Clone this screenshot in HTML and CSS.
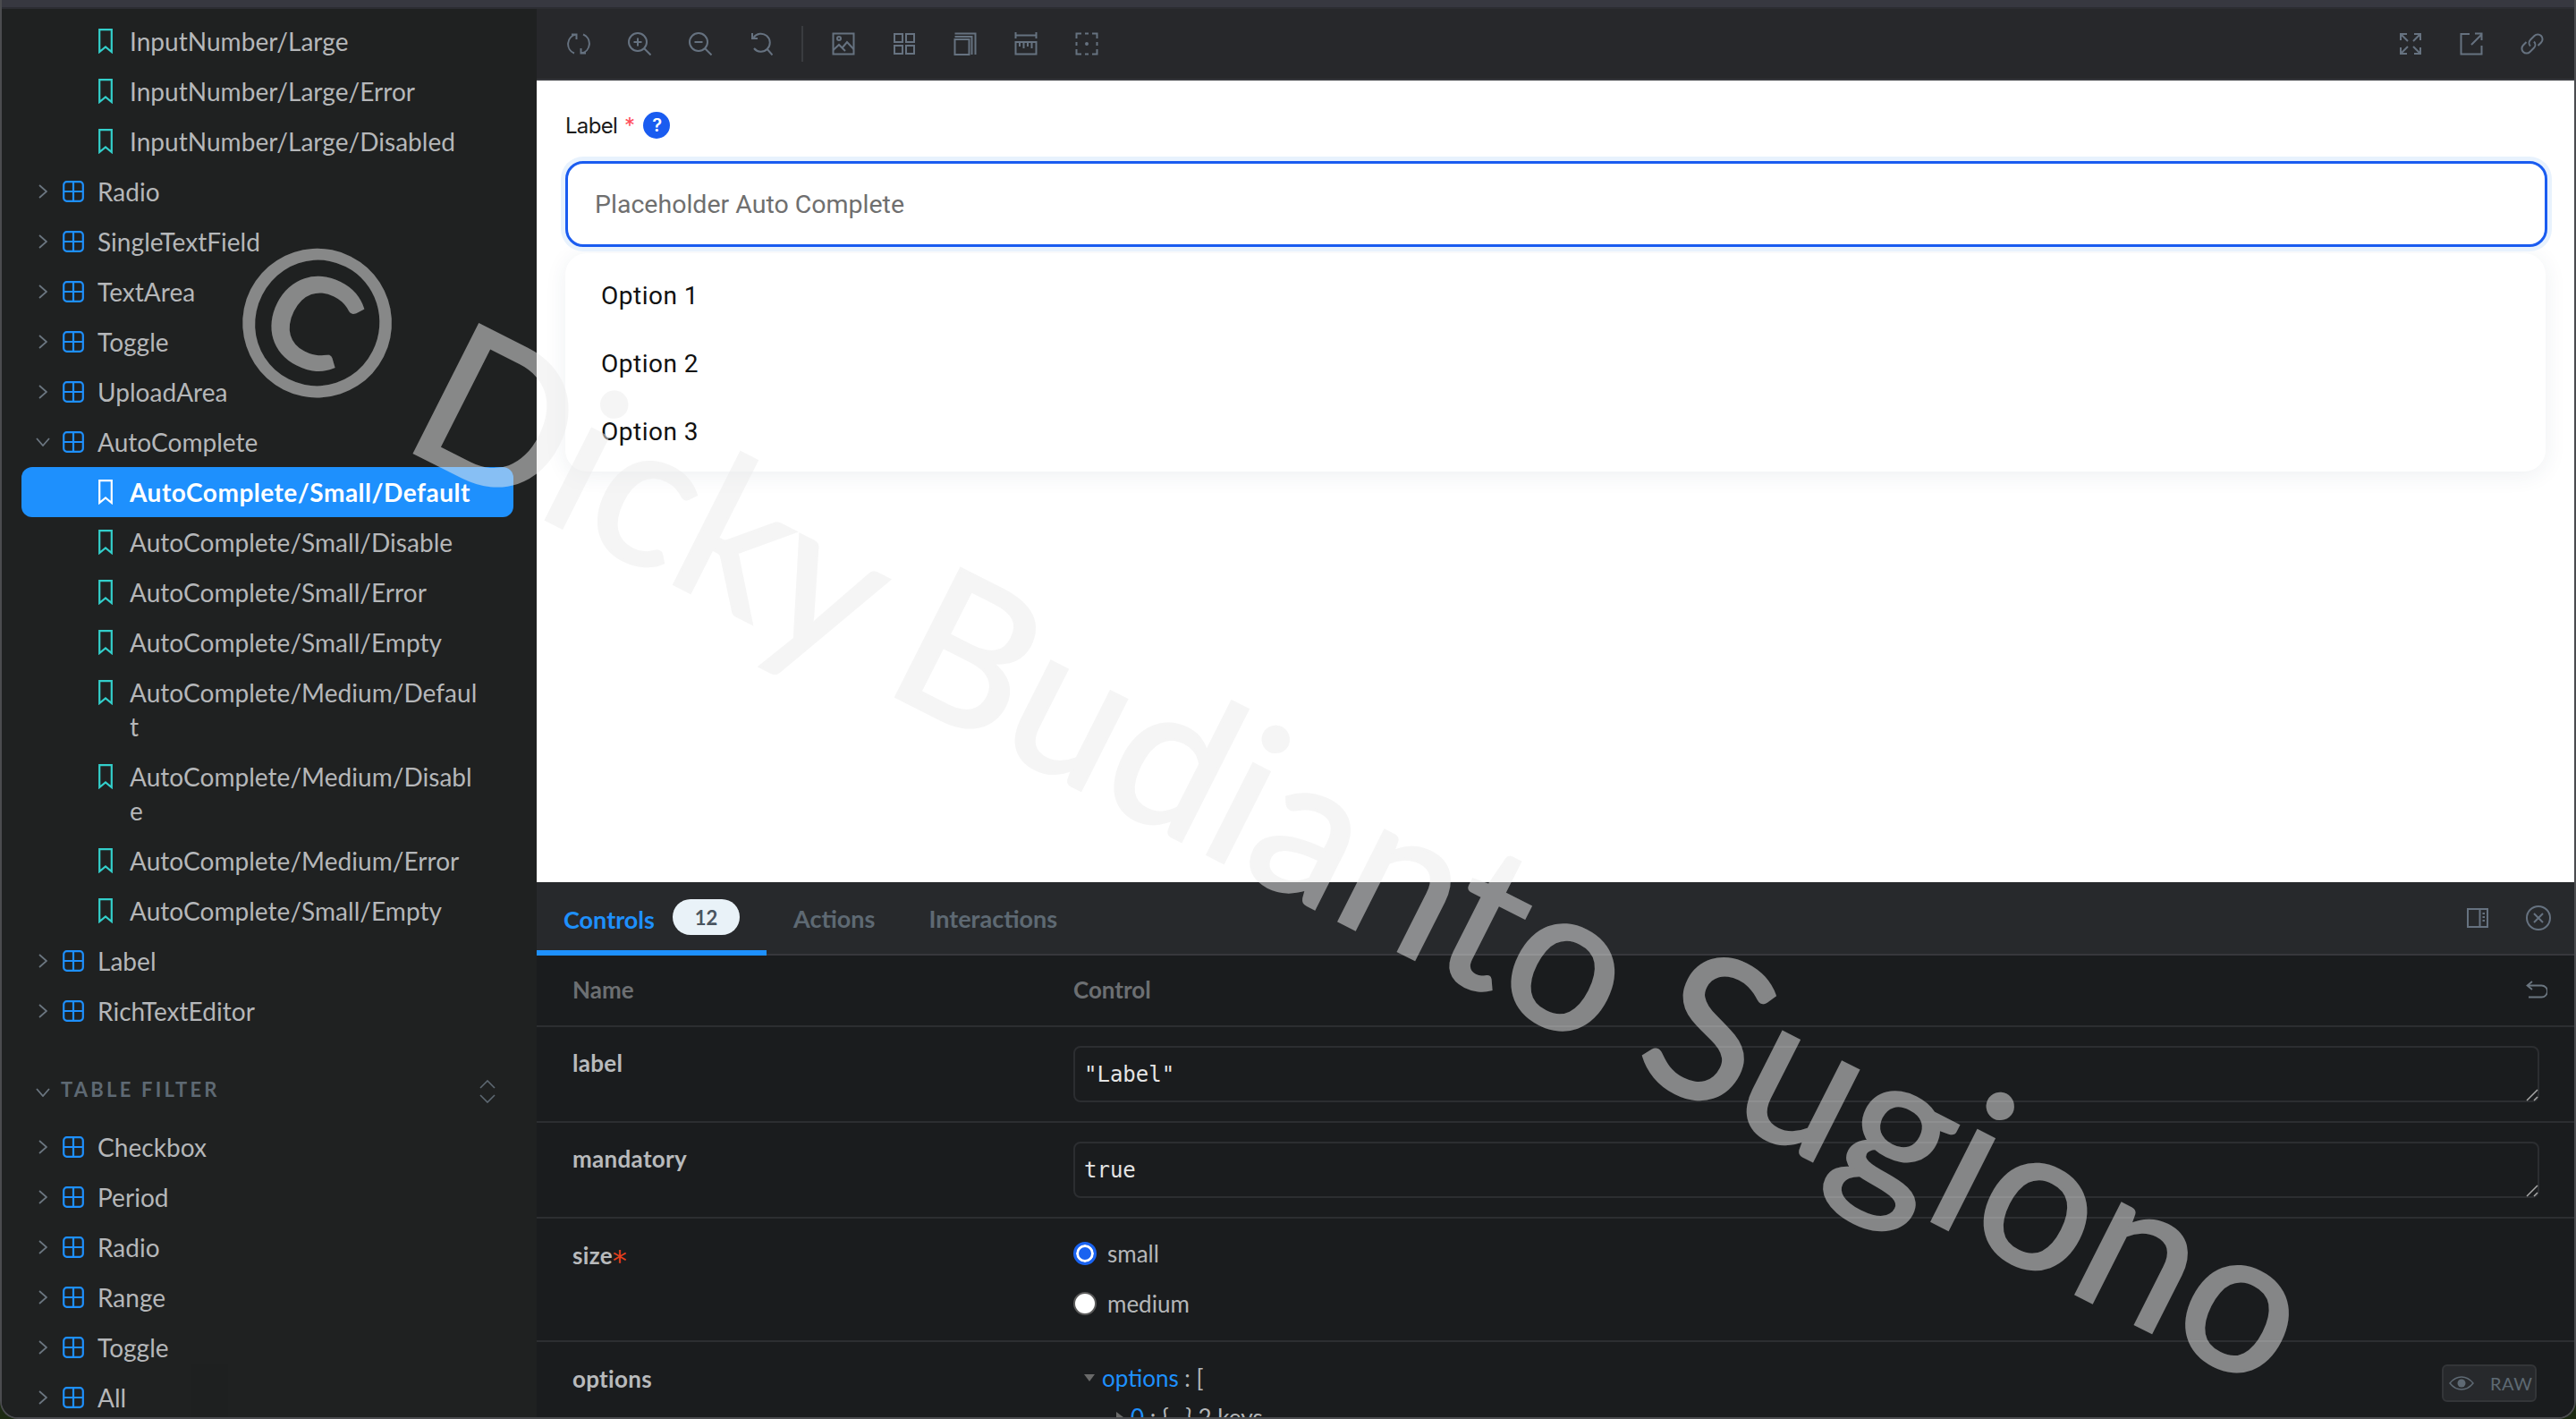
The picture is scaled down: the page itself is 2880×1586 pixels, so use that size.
FILE: index.html
```html
<!DOCTYPE html>
<html lang="en">
<head>
<meta charset="utf-8">
<title>AutoComplete/Small/Default</title>
<link rel="stylesheet" href="styles.css">
</head>
<body>
<svg class="defs" width="0" height="0" aria-hidden="true">
  <symbol id="bm" viewBox="0 0 16 28"><path d="M1.2 1.2H14.8V26L8 20.5 1.2 26Z" fill="none" stroke="currentColor" stroke-width="2.2"/></symbol>
  <symbol id="gr" viewBox="0 0 24 24"><rect x="1.2" y="1.2" width="21.6" height="21.6" rx="3.5" fill="none" stroke="currentColor" stroke-width="2.2"/><path d="M12 1.2V22.8M1.2 12H22.8" fill="none" stroke="currentColor" stroke-width="2.2"/></symbol>
  <symbol id="cr" viewBox="0 0 10 16"><path d="M1 1L9 8L1 15" fill="none" stroke="currentColor" stroke-width="1.8"/></symbol>
</svg>
<div class="app">
  <div class="topstrip"></div>
  <div class="body">
    <aside class="sidebar">
      <a class="row story"><svg class="bm"><use href="#bm"/></svg><span>InputNumber/Large</span></a>
      <a class="row story"><svg class="bm"><use href="#bm"/></svg><span>InputNumber/Large/Error</span></a>
      <a class="row story"><svg class="bm"><use href="#bm"/></svg><span>InputNumber/Large/Disabled</span></a>
      <a class="row comp"><svg class="cr"><use href="#cr"/></svg><svg class="gr"><use href="#gr"/></svg><span>Radio</span></a>
      <a class="row comp"><svg class="cr"><use href="#cr"/></svg><svg class="gr"><use href="#gr"/></svg><span>SingleTextField</span></a>
      <a class="row comp"><svg class="cr"><use href="#cr"/></svg><svg class="gr"><use href="#gr"/></svg><span>TextArea</span></a>
      <a class="row comp"><svg class="cr"><use href="#cr"/></svg><svg class="gr"><use href="#gr"/></svg><span>Toggle</span></a>
      <a class="row comp"><svg class="cr"><use href="#cr"/></svg><svg class="gr"><use href="#gr"/></svg><span>UploadArea</span></a>
      <a class="row comp"><svg class="cd" viewBox="0 0 16 10"><path d="M1 1L8 9L15 1" fill="none" stroke="currentColor" stroke-width="1.8"/></svg><svg class="gr"><use href="#gr"/></svg><span>AutoComplete</span></a>
      <a class="row story active"><svg class="bm"><use href="#bm"/></svg><span>AutoComplete/Small/Default</span></a>
      <a class="row story"><svg class="bm"><use href="#bm"/></svg><span>AutoComplete/Small/Disable</span></a>
      <a class="row story"><svg class="bm"><use href="#bm"/></svg><span>AutoComplete/Small/Error</span></a>
      <a class="row story"><svg class="bm"><use href="#bm"/></svg><span>AutoComplete/Small/Empty</span></a>
      <a class="row story"><svg class="bm"><use href="#bm"/></svg><span>AutoComplete/Medium/Defaul<br>t</span></a>
      <a class="row story"><svg class="bm"><use href="#bm"/></svg><span>AutoComplete/Medium/Disabl<br>e</span></a>
      <a class="row story"><svg class="bm"><use href="#bm"/></svg><span>AutoComplete/Medium/Error</span></a>
      <a class="row story"><svg class="bm"><use href="#bm"/></svg><span>AutoComplete/Small/Empty</span></a>
      <a class="row comp"><svg class="cr"><use href="#cr"/></svg><svg class="gr"><use href="#gr"/></svg><span>Label</span></a>
      <a class="row comp"><svg class="cr"><use href="#cr"/></svg><svg class="gr"><use href="#gr"/></svg><span>RichTextEditor</span></a>
      <div class="group">
        <svg class="cd" viewBox="0 0 16 10"><path d="M1 1L8 9L15 1" fill="none" stroke="currentColor" stroke-width="1.8"/></svg>
        <span class="grouptitle">TABLE FILTER</span>
        <svg class="sort" viewBox="0 0 18 26"><path d="M1 9L9 1L17 9M1 17L9 25L17 17" fill="none" stroke="currentColor" stroke-width="1.6"/></svg>
      </div>
      <a class="row comp"><svg class="cr"><use href="#cr"/></svg><svg class="gr"><use href="#gr"/></svg><span>Checkbox</span></a>
      <a class="row comp"><svg class="cr"><use href="#cr"/></svg><svg class="gr"><use href="#gr"/></svg><span>Period</span></a>
      <a class="row comp"><svg class="cr"><use href="#cr"/></svg><svg class="gr"><use href="#gr"/></svg><span>Radio</span></a>
      <a class="row comp"><svg class="cr"><use href="#cr"/></svg><svg class="gr"><use href="#gr"/></svg><span>Range</span></a>
      <a class="row comp"><svg class="cr"><use href="#cr"/></svg><svg class="gr"><use href="#gr"/></svg><span>Toggle</span></a>
      <a class="row comp"><svg class="cr"><use href="#cr"/></svg><svg class="gr"><use href="#gr"/></svg><span>All</span></a>
    </aside>
    <main class="main">
      <header class="toolbar">
        <svg class="ti" viewBox="0 0 26 26"><path d="M10 2.500A11 11 0 0 0 8 23.500M5 2.500H10.500V8M16 23.500A11 11 0 0 0 18 2.500M21 23.500H15.500V18"/></svg>
        <svg class="ti" viewBox="0 0 26 26"><circle cx="11" cy="11" r="10"/><path d="M18 18L25.500 25.500M11 6.500V15.500M6.500 11H15.500"/></svg>
        <svg class="ti" viewBox="0 0 26 26"><circle cx="11" cy="11" r="10"/><path d="M18 18L25.500 25.500M6.500 11H15.500"/></svg>
        <svg class="ti" viewBox="0 0 26 26"><path d="M4.500 6A10 10 0 1 1 5 18M19 18L25.500 25.500M3 1V7H9"/></svg>
        <span class="tsep"></span>
        <svg class="ti" viewBox="0 0 26 26"><rect x="1.500" y="1.500" width="23" height="23"/><circle cx="8" cy="7" r="2"/><path d="M1.500 20L8 14 15 21M12 17L17 11 24.500 19"/></svg>
        <svg class="ti" viewBox="0 0 26 26"><rect x="2" y="2" width="9" height="9"/><rect x="15" y="2" width="9" height="9"/><rect x="2" y="15" width="9" height="9"/><rect x="15" y="15" width="9" height="9"/></svg>
        <svg class="ti" viewBox="0 0 26 26"><rect x="1.500" y="8" width="16" height="17"/><path d="M1.500 5H20.500V25M1.500 1.500H24.500V25"/></svg>
        <svg class="ti" viewBox="0 0 26 26"><path d="M1.500 0V7M24.500 0V7M1.500 3.500H24.500"/><rect x="1.500" y="11" width="23" height="13.500"/><path d="M6 11V16M10.500 11V18M15 11V16M19.500 11V18"/></svg>
        <svg class="ti dash" viewBox="0 0 26 26"><path d="M1.500 7V1.500H7M11 1.500H15M19 1.500H24.500V7M24.500 11V15M24.500 19V24.500H19M15 24.500H11M7 24.500H1.500V19M1.500 15V11"/><circle cx="13" cy="13" r="1"/></svg>
        <span class="spacer"></span>
        <svg class="ti" viewBox="0 0 26 26"><path d="M2 2L10 10M2 9V2H9M24 2L16 10M24 9V2H17M2 24L10 16M2 17V24H9M24 24L16 16M24 17V24H17"/></svg>
        <svg class="ti" viewBox="0 0 26 26"><path d="M11 2H1.500V24.500H24.500V15M13 14L25 2M17 1.500H24.500V9"/></svg>
        <svg class="ti" viewBox="0 0 26 26"><path d="M11 15.500A5 5 0 0 1 11 8.500L15.500 4A5.300 5.300 0 0 1 23 11.500L19.500 15M15 10.500A5 5 0 0 1 15 17.500L10.500 22A5.300 5.300 0 0 1 3 14.500L6.500 11"/></svg>
      </header>
      <section class="canvas">
        <div class="fieldlabel"><span>Label</span><span class="star">*</span><span class="help">?</span></div>
        <div class="input">Placeholder Auto Complete</div>
        <ul class="menu">
          <li>Option 1</li>
          <li>Option 2</li>
          <li>Option 3</li>
        </ul>
      </section>
      <section class="panel">
        <nav class="tabs">
          <a class="tab on"><span>Controls</span><b class="badge">12</b></a>
          <a class="tab">Actions</a>
          <a class="tab">Interactions</a>
          <span class="spacer"></span>
          <svg class="pi" viewBox="0 0 24 24"><rect x="1" y="2" width="22" height="20"/><path d="M14.500 2V22M17.500 7H20M17.500 11H20M17.500 15H20"/></svg>
          <svg class="pi close" viewBox="0 0 28 28"><circle cx="14" cy="14" r="13"/><path d="M9 9L19 19M19 9L9 19"/></svg>
        </nav>
        <div class="argrow head">
          <span>Name</span><span>Control</span>
          <svg class="undo" viewBox="0 0 24 20"><path d="M7 1L1.500 5.500 7 10M1.500 5.500H17.500A6 6 0 0 1 17.500 18.500H3"/></svg>
        </div>
        <div class="argrow"><span class="argname">label</span><div class="textwrap"><textarea class="text" spellcheck="false">"Label"</textarea><svg class="grip" viewBox="0 0 14 14"><path d="M1 13L13 1M9 13L13 9"/></svg></div></div>
        <div class="argrow"><span class="argname">mandatory</span><div class="textwrap"><textarea class="text" spellcheck="false">true</textarea><svg class="grip" viewBox="0 0 14 14"><path d="M1 13L13 1M9 13L13 9"/></svg></div></div>
        <div class="argrow sizerow">
          <span class="argname">size<i class="req">*</i></span>
          <div class="radios">
            <label class="radio"><span class="dot sel"></span>small</label>
            <label class="radio"><span class="dot"></span>medium</label>
          </div>
        </div>
        <div class="argrow optrow">
          <span class="argname">options</span>
          <div class="json">
            <div class="jline"><i class="tri"></i><span class="jkey">options</span><span class="jp"> : [</span></div>
            <div class="jline nested"><i class="tri closed"></i><span class="jkey">0</span><span class="jp"> : {...} 2 keys</span></div>
          </div>
          <a class="raw"><svg class="eye" viewBox="0 0 28 16"><path d="M1 8C5 3 9 1 14 1S23 3 27 8C23 13 19 15 14 15S5 13 1 8Z" fill="none" stroke="currentColor" stroke-width="1.500"/><circle cx="14" cy="8" r="4.500" fill="currentColor"/></svg><span>RAW</span></a>
        </div>
      </section>
    </main>
  </div>
  <div class="watermark">© Dicky Budianto Sugiono</div>
</div>
</body>
</html>
```
FILE: styles.css
```css
* { box-sizing: border-box; }
html, body { margin: 0; padding: 0; height: 100%; }
body { background: #1c2a12; overflow: hidden; font-family: "Lato", sans-serif; }
.defs { position: absolute; }

.app {
  position: relative;
  width: 2880px;
  height: 1586px;
  display: flex;
  flex-direction: column;
  overflow: hidden;
  border: solid #4b4c4f;
  border-width: 0 2px 2px 2px;
  border-radius: 0 0 20px 20px;
  background: #1a1c1e;
}
.topstrip { height: 10px; flex: none; background: #373840; border-bottom: 2px solid #2c2d32; }
.body { flex: 1; min-height: 0; display: flex; }

/* sidebar */
.sidebar {
  width: 598px;
  flex: none;
  padding: 8px 26px 0 22px;
  background: #1f2121;
  overflow: hidden;
  color: #b5b7b9;
  font-size: 28px;
  line-height: 38px;
  letter-spacing: .04px;
}
.row { display: flex; align-items: flex-start; padding: 9px 0; border-radius: 12px; }
.row svg { flex: none; }
.story { padding-left: 86px; }
.comp { padding-left: 19px; }
.bm { width: 16px; height: 28px; margin: 5px 19px 0 0; color: #33cfcb; }
.gr { width: 24px; height: 24px; margin: 7px 15px 0 0; color: #1e90fd; }
.cr { width: 10px; height: 16px; margin: 11px 17px 0 0; color: #6b7680; }
.cd { width: 16px; height: 10px; margin: 14px 14px 0 -3px; color: #6b7680; flex: none; }
.active { background: #1e90fd; color: #fff; font-weight: 700; letter-spacing: .5px; }
.active .bm { color: #fff; }
.group { display: flex; align-items: flex-start; height: 55px; margin-top: 41px; padding: 4px 0 0 19px; color: #5e6973; letter-spacing: 0; }
.group .cd { margin: 13px 12px 0 -3px; }
.grouptitle { flex: 1; font-size: 22px; font-weight: 700; letter-spacing: 3.200px; line-height: 30px; }
.sort { width: 18px; height: 26px; margin: 4px 20px 0 0; flex: none; }

/* main column */
.main { flex: 1; min-width: 0; display: flex; flex-direction: column; }
.toolbar {
  height: 80px;
  flex: none;
  display: flex;
  align-items: center;
  gap: 42px;
  padding: 0 34px 0 34px;
  background: #27282b;
  border-bottom: 2px solid #37383c;
}
.ti { width: 26px; height: 26px; flex: none; fill: none; stroke: #667280; stroke-width: 2; }
.dash circle { fill: #667280; }
.tsep { width: 2px; height: 40px; background: #3a3c40; margin: 0 -10px; flex: none; }
.spacer { flex: 1; }

/* canvas */
.canvas { height: 896px; flex: none; background: #fff; padding: 35px 30px 0 32px; font-family: "Roboto", sans-serif; color: #1a1a1a; }
.fieldlabel { display: flex; align-items: center; height: 30px; font-size: 24px; font-family: "Inter", sans-serif; letter-spacing: -.7px; }
.star { color: #ff4d5a; margin: 0 10px 0 8px; }
.help { width: 30px; height: 30px; border-radius: 50%; background: #1a5cf0; color: #fff; font-size: 20px; font-weight: 600; display: flex; align-items: center; justify-content: center; }
.input {
  height: 96px;
  margin-top: 25px;
  padding-left: 30px;
  display: flex;
  align-items: center;
  border: 3px solid #1a5cf0;
  border-radius: 20px;
  box-shadow: 0 0 0 5px #e8f2fd;
  font-size: 28.500px;
  color: #6f6f6f;
  background: #fff;
  position: relative;
}
.menu {
  list-style: none;
  margin: 7px 2px 0 0;
  padding: 9px 0;
  height: 244px;
  background: #fff;
  border-radius: 24px;
  box-shadow: 0 4px 24px rgba(40, 60, 90, .08);
  font-size: 28px;
  color: #111;
}
.menu li { height: 76px; padding-left: 40px; display: flex; align-items: center; letter-spacing: .5px; }

/* panel */
.panel { flex: 1; min-height: 0; overflow: hidden; background: #1a1c1e; color: #b5b7b9; font-size: 26px; }
.tabs {
  height: 82px;
  display: flex;
  align-items: center;
  padding-right: 26px;
  background: #27292c;
  border-bottom: 2px solid #37383c;
  font-size: 27px;
  font-weight: 700;
  color: #5e6973;
}
.tab { height: 82px; display: flex; align-items: center; padding: 0 30px 0 30px; }
.tab.on { color: #1e90fd; border-bottom: 6px solid #1e90fd; margin-bottom: -2px; width: 257px; padding-top: 6px; justify-content: flex-start; gap: 20px; }
.badge { width: 75px; height: 40px; border-radius: 20px; background: #e9f2f8; color: #4a5560; font-size: 22px; display: flex; align-items: center; justify-content: center; font-weight: 700; margin-top: -4px; }
.tab.on + .tab { padding-left: 30px; }
.pi { flex: none; width: 24px; height: 24px; fill: none; stroke: #667280; stroke-width: 2; margin-left: 42px; }
.pi.close { width: 28px; height: 28px; }

.argrow {
  position: relative;
  display: grid;
  grid-template-columns: 560px 1fr;
  padding: 21px 39px 20px 40px;
  height: 107px;
  border-bottom: 2px solid #2c2e31;
  line-height: 36px;
}
.argrow.head { height: 80px; padding-top: 20px; font-weight: 700; color: #6c6f72; }
.undo { position: absolute; right: 30px; top: 28px; width: 24px; height: 20px; fill: none; stroke: #6b7680; stroke-width: 1.800; }
.argname { font-weight: 700; color: #b8babc; margin-top: 1px; letter-spacing: .3px; }
.textwrap { position: relative; height: 63px; }
.text {
  display: block;
  width: 100%;
  height: 63px;
  resize: none;
  background: transparent;
  border: 2px solid #2c2e31;
  border-radius: 8px;
  padding: 15px 10px 13px;
  color: #e4e4e4;
  font: 24px/30px "DejaVu Sans Mono", monospace;
  outline: none;
  overflow: hidden;
}
.grip { position: absolute; right: 1px; bottom: 1px; width: 14px; height: 14px; fill: none; stroke: #a8a8a8; stroke-width: 1.500; }
.sizerow { height: 138px; padding-top: 22px; }
.req { color: #e8401c; font: normal 32px/0 "DejaVu Sans", sans-serif; vertical-align: -7px; }
.radios { display: flex; flex-direction: column; gap: 20px; margin-top: -1px; }
.radio { display: flex; align-items: center; gap: 12px; height: 36px; }
.dot { width: 26px; height: 26px; border-radius: 50%; background: #fff; border: 2px solid #5a5a5a; }
.dot.sel { border: 3px solid #1a63f0; background: #1a63f0; box-shadow: inset 0 0 0 3px #fff; }
.optrow { height: 100px; border: 0; padding-top: 22px; }
.json { font-size: 26px; }
.jline { display: flex; align-items: center; height: 36px; margin-left: 12px; }
.nested { margin: 8px 0 0 48px; }
.tri { width: 0; height: 0; margin-right: 8px; border: solid transparent; border-width: 8px 6px 0; border-top-color: #6a6a6a; }
.tri.closed { border-width: 6px 0 6px 8px; border-color: transparent transparent transparent #6a6a6a; }
.jkey { color: #1e90fd; }
.jp { color: #b5b7b9; white-space: pre; }
.raw {
  position: absolute;
  right: 42px;
  top: 25px;
  width: 106px;
  height: 42px;
  display: flex;
  align-items: center;
  gap: 18px;
  padding-left: 6px;
  background: #27292c;
  border: 2px solid #333538;
  border-radius: 6px;
  color: #5e6973;
  font-size: 20px;
  font-weight: 400;
  letter-spacing: .5px;
}
.eye { width: 28px; height: 16px; flex: none; }

/* watermark */
.watermark {
  position: absolute;
  left: 272px;
  top: 202px;
  font-size: 224px;
  line-height: 1;
  white-space: nowrap;
  color: #ececec;
  opacity: .51;
  -webkit-text-stroke: 3px #ececec;
  letter-spacing: .4px;
  word-spacing: -9px;
  transform: rotate(26.850deg);
  transform-origin: 0 50%;
  pointer-events: none;
}
```
